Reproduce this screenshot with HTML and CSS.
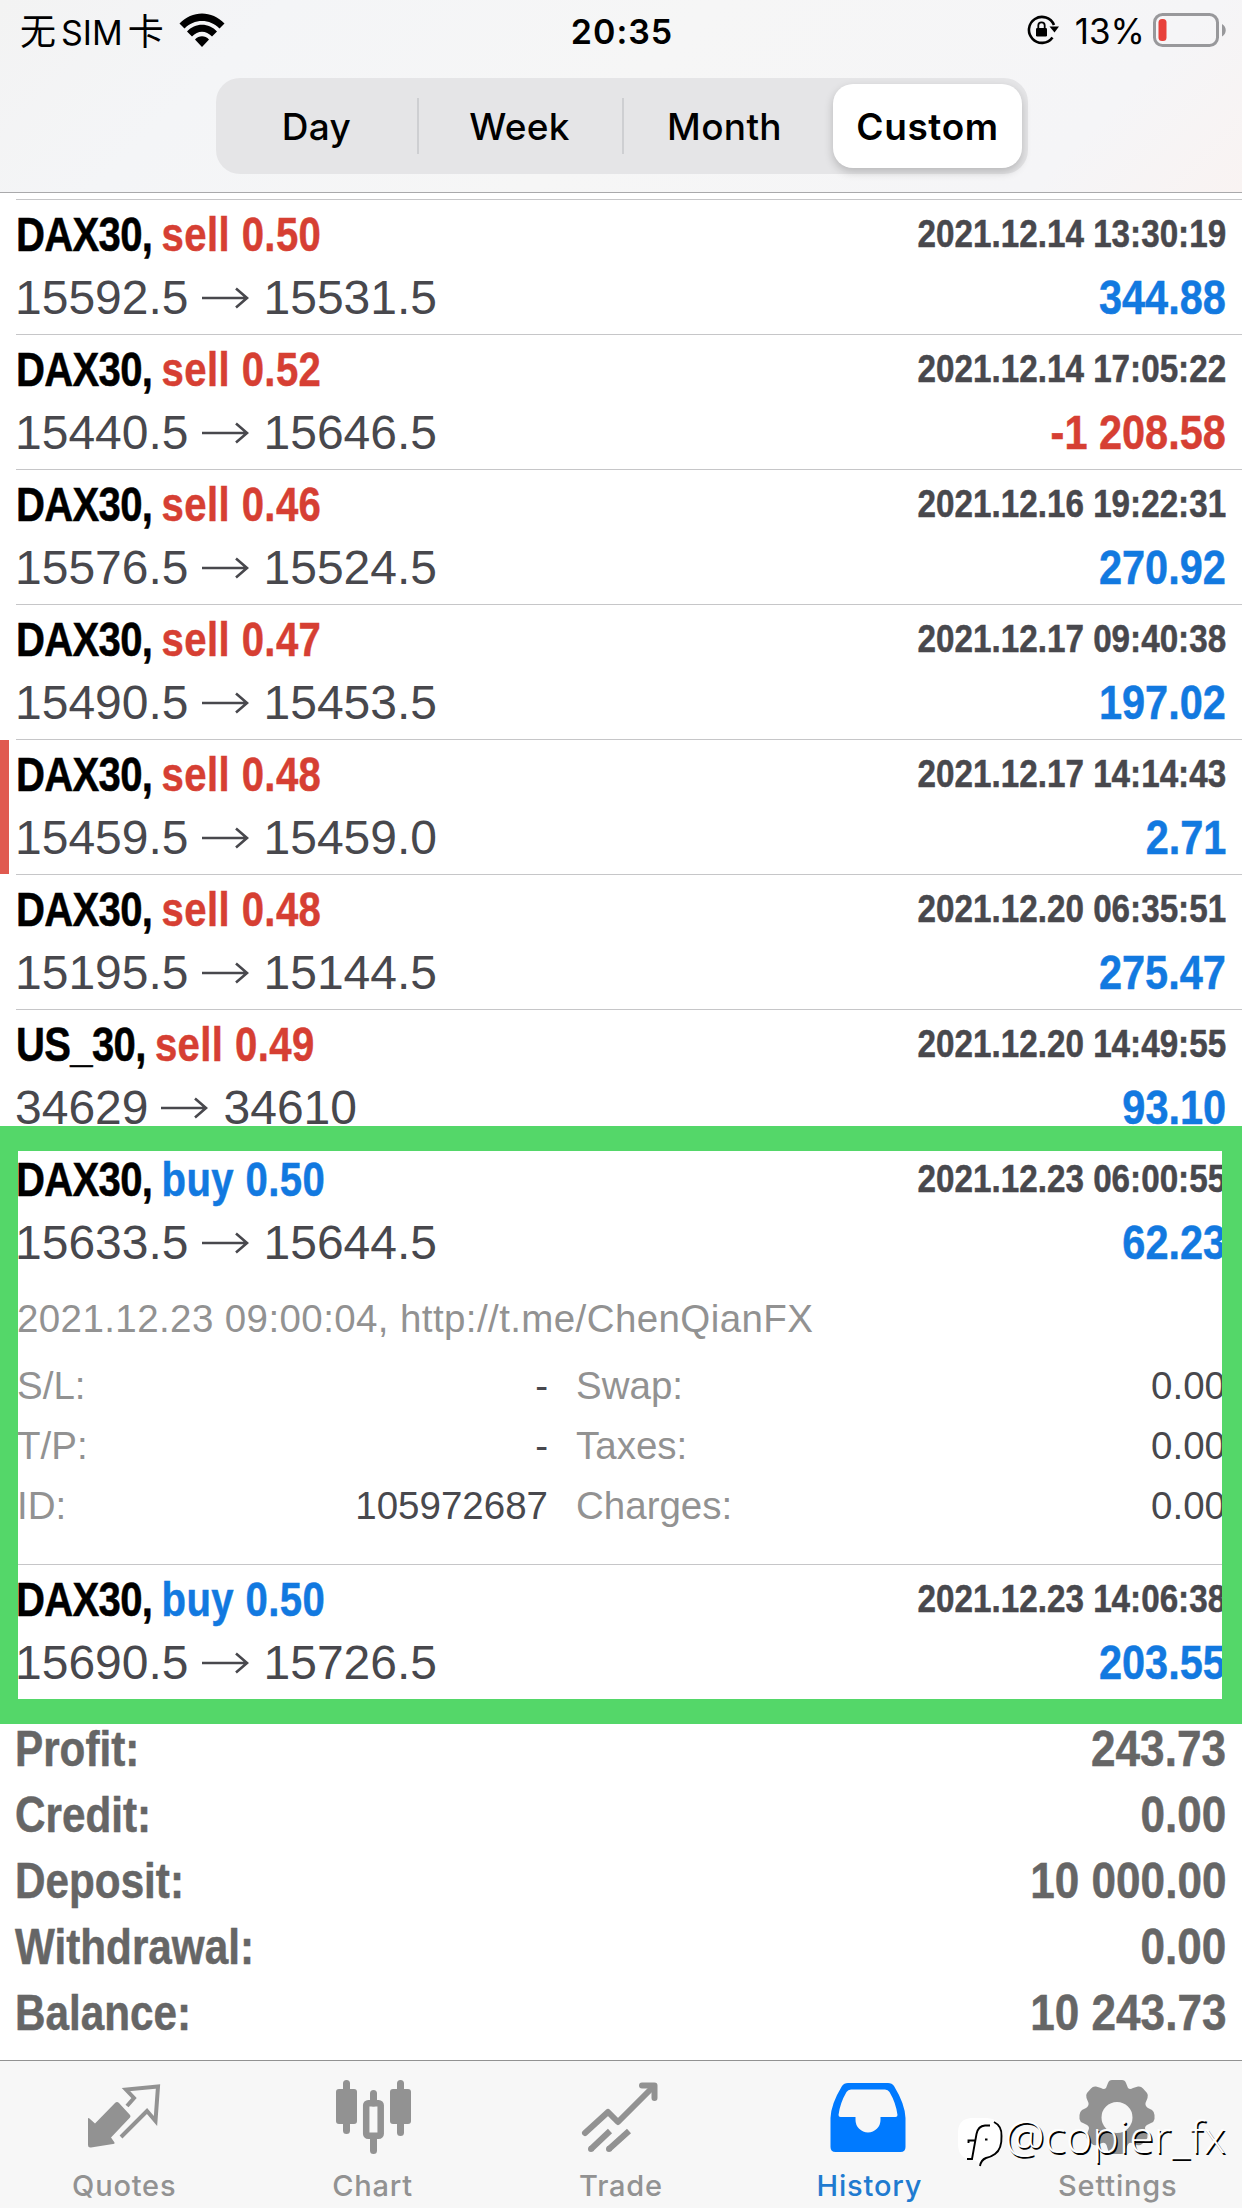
FILE: index.html
```
<!DOCTYPE html>
<html lang="en">

<head>
    <meta charset="UTF-8">
    <meta name="viewport" content="width=device-width, initial-scale=1.0">
    <title>History</title>
    <link rel="stylesheet" href="styles.css">
</head>

<body>
    <header class="header">
        <div class="status-bar">
            <div class="status-left">
                <span class="carrier"><span class="han">无</span><span>SIM</span><span class="han">卡</span></span>
                <svg class="wifi" width="46" height="34" viewBox="0 0 46 34">
                    <path d="M0.5 10.5 C13 -3 33 -3 45.5 10.5 L40.5 15.5 C31 5.5 15 5.5 5.5 15.5 Z" />
                    <path d="M8 18.5 C16 9.5 30 9.5 38 18.5 L33 23.5 C27 17 19 17 13 23.5 Z" />
                    <path d="M16 26.5 C20 22.3 26 22.3 30 26.5 L23 34 Z" />
                </svg>
            </div>
            <span class="time">20:35</span>
            <div class="status-right">
                <svg class="lock" width="33" height="30" viewBox="0 0 33 30">
                    <path d="M27 10 A13 13 0 1 0 25.5 22.5" fill="none" stroke="#000" stroke-width="2.6" />
                    <path d="M22.5 11.5 H32 L27.5 17.5 Z" />
                    <rect x="9" y="13" width="11" height="8.5" rx="1.2" />
                    <path d="M11.3 14 V10.5 a3.2 3.2 0 0 1 6.4 0 V14" fill="none" stroke="#000" stroke-width="1.8" />
                </svg>
                <span class="percent">13%</span>
                <svg width="74" height="34" viewBox="0 0 74 34">
                    <rect x="1.5" y="1.5" width="63" height="31" rx="8" fill="none" stroke="#98989b" stroke-width="3" />
                    <rect x="5.5" y="6" width="8" height="22" rx="3.5" fill="#e8403a" />
                    <path d="M69 11 c5 2.5 5 10 0 12.5 Z" fill="#98989b" />
                </svg>
            </div>
        </div>
        <div class="segments">
            <div class="segment">Day</div>
            <div class="segment divided">Week</div>
            <div class="segment divided">Month</div>
            <div class="segment selected">Custom</div>
        </div>
    </header>

    <main class="deals">
        <div class="deal">
            <div class="line"><span class="symbol">DAX30, <b class="sell">sell 0.50</b></span><span class="date">2021.12.14 13:30:19</span></div>
            <div class="line"><span class="prices">15592.5<svg class="arrow" viewBox="0 0 48 24"><path d="M0 12 H45 M34 2.5 L45 12 L34 21.5" /></svg>15531.5</span><span class="amount buy">344.88</span></div>
        </div>
        <div class="deal">
            <div class="line"><span class="symbol">DAX30, <b class="sell">sell 0.52</b></span><span class="date">2021.12.14 17:05:22</span></div>
            <div class="line"><span class="prices">15440.5<svg class="arrow" viewBox="0 0 48 24"><path d="M0 12 H45 M34 2.5 L45 12 L34 21.5" /></svg>15646.5</span><span class="amount sell">-1 208.58</span></div>
        </div>
        <div class="deal">
            <div class="line"><span class="symbol">DAX30, <b class="sell">sell 0.46</b></span><span class="date">2021.12.16 19:22:31</span></div>
            <div class="line"><span class="prices">15576.5<svg class="arrow" viewBox="0 0 48 24"><path d="M0 12 H45 M34 2.5 L45 12 L34 21.5" /></svg>15524.5</span><span class="amount buy">270.92</span></div>
        </div>
        <div class="deal">
            <div class="line"><span class="symbol">DAX30, <b class="sell">sell 0.47</b></span><span class="date">2021.12.17 09:40:38</span></div>
            <div class="line"><span class="prices">15490.5<svg class="arrow" viewBox="0 0 48 24"><path d="M0 12 H45 M34 2.5 L45 12 L34 21.5" /></svg>15453.5</span><span class="amount buy">197.02</span></div>
        </div>
        <div class="deal stopped">
            <div class="line"><span class="symbol">DAX30, <b class="sell">sell 0.48</b></span><span class="date">2021.12.17 14:14:43</span></div>
            <div class="line"><span class="prices">15459.5<svg class="arrow" viewBox="0 0 48 24"><path d="M0 12 H45 M34 2.5 L45 12 L34 21.5" /></svg>15459.0</span><span class="amount buy">2.71</span></div>
        </div>
        <div class="deal">
            <div class="line"><span class="symbol">DAX30, <b class="sell">sell 0.48</b></span><span class="date">2021.12.20 06:35:51</span></div>
            <div class="line"><span class="prices">15195.5<svg class="arrow" viewBox="0 0 48 24"><path d="M0 12 H45 M34 2.5 L45 12 L34 21.5" /></svg>15144.5</span><span class="amount buy">275.47</span></div>
        </div>
        <div class="deal">
            <div class="line"><span class="symbol">US_30, <b class="sell">sell 0.49</b></span><span class="date">2021.12.20 14:49:55</span></div>
            <div class="line"><span class="prices">34629<svg class="arrow" viewBox="0 0 48 24"><path d="M0 12 H45 M34 2.5 L45 12 L34 21.5" /></svg>34610</span><span class="amount buy">93.10</span></div>
        </div>

        <div class="highlighted">
            <div class="deal">
                <div class="line"><span class="symbol">DAX30, <b class="buy">buy 0.50</b></span><span class="date">2021.12.23 06:00:55</span></div>
                <div class="line"><span class="prices">15633.5<svg class="arrow" viewBox="0 0 48 24"><path d="M0 12 H45 M34 2.5 L45 12 L34 21.5" /></svg>15644.5</span><span class="amount buy">62.23</span></div>
                <div class="details">
                    <p class="comment">2021.12.23 09:00:04, http://t.me/ChenQianFX</p>
                    <div class="detail-grid">
                        <span>S/L:</span><span class="value">-</span><span>Swap:</span><span class="value">0.00</span>
                        <span>T/P:</span><span class="value">-</span><span>Taxes:</span><span class="value">0.00</span>
                        <span>ID:</span><span class="value">105972687</span><span>Charges:</span><span class="value">0.00</span>
                    </div>
                </div>
            </div>
            <div class="deal">
                <div class="line"><span class="symbol">DAX30, <b class="buy">buy 0.50</b></span><span class="date">2021.12.23 14:06:38</span></div>
                <div class="line"><span class="prices">15690.5<svg class="arrow" viewBox="0 0 48 24"><path d="M0 12 H45 M34 2.5 L45 12 L34 21.5" /></svg>15726.5</span><span class="amount buy">203.55</span></div>
            </div>
            <div class="frame"></div>
        </div>
    </main>

    <section class="summary">
        <div class="total"><span class="label">Profit:</span><span class="sum">243.73</span></div>
        <div class="total"><span class="label">Credit:</span><span class="sum">0.00</span></div>
        <div class="total"><span class="label">Deposit:</span><span class="sum">10 000.00</span></div>
        <div class="total"><span class="label">Withdrawal:</span><span class="sum">0.00</span></div>
        <div class="total"><span class="label">Balance:</span><span class="sum">10 243.73</span></div>
    </section>

    <nav class="tab-bar">
        <div class="tab">
            <svg width="80" height="80" viewBox="0 0 80 80">
                <path d="M4 45 Q4 43 6 45 L11 49.5 L31 29 Q33 27 35 29 L46 41 Q47 42 46 43.5 L27 63.5 L30.5 68.5 Q31 70 29 70 L7 73.5 Q4 74 4 71 Z" />
                <path d="M43 32 L50 24 L42 15.5 L74 12.5 L71.5 47 L63 37 L37 63" fill="none" stroke="#929292" stroke-width="4" />
            </svg>
            <span>Quotes</span>
        </div>
        <div class="tab">
            <svg width="80" height="80" viewBox="0 0 80 80">
                <path d="M14.5 9.5 V56.5 M68.5 9.5 V58.5 M41.5 19.5 V29 M41.5 65 V76.5" fill="none" stroke="#929292" stroke-width="7" stroke-linecap="round" />
                <rect x="4" y="15" width="21" height="35" rx="3" />
                <rect x="58" y="15" width="21" height="35" rx="3" />
                <rect x="34.2" y="29.2" width="14.5" height="32.5" rx="2" fill="none" stroke="#929292" stroke-width="6.5" />
            </svg>
            <span>Chart</span>
        </div>
        <div class="tab">
            <svg width="80" height="80" viewBox="0 0 80 80">
                <g fill="none" stroke="#929292" stroke-width="6">
                    <path d="M5 59 L28 38 L38 48 L72 14" stroke-linecap="round" stroke-linejoin="round" />
                    <path d="M62 11.5 H74.5 V24" stroke-linecap="round" stroke-linejoin="round" />
                    <path d="M11 75 L30 57 M29 75 L49 57" />
                </g>
                <circle cx="11" cy="75" r="3" />
                <circle cx="29" cy="75" r="3" />
            </svg>
            <span>Trade</span>
        </div>
        <div class="tab active">
            <svg width="80" height="80" viewBox="0 0 80 80">
                <path fill-rule="evenodd" d="M20 9 H60 Q64 9 66 12 Q77 30 77.5 44 V73 Q77.5 78 72.5 78 H7.5 Q2.5 78 2.5 73 V44 Q3 30 14 12 Q16 9 20 9 Z M23 15.5 H57 Q60 15.5 61.5 18 Q68 29 69.5 41 Q69.5 43 67.5 43 H52.5 V46 A12.5 12.5 0 0 1 27.5 46 V43 H12.5 Q10.5 43 10.5 41 Q12 29 18.5 18 Q20 15.5 23 15.5 Z" />
            </svg>
            <span>History</span>
        </div>
        <div class="tab">
            <svg width="80" height="80" viewBox="0 0 80 80">
                <path fill-rule="evenodd" d="M35 6 H45 Q48 6 49 9 L51 14 Q53 16 56 14 L61 12.5 Q64 12 66 14.5 L70 19 Q71.5 21 70.5 24 L68.5 29 Q68 32 71 34 L75 36 Q77.5 38 77.5 41 V45 Q77 48 74 49 L70 51 Q67 53 68.5 56 L70.5 61 Q71 64 69 66 L65 70 Q63 72 60 71 L55 69 Q52 68 50.5 71 L49 76 Q47 80 44 80 H36 Q33 80 31 76 L29.5 71 Q28 68 25 69 L20 71 Q17 72 15 70 L11 66 Q9 64 9.5 61 L11.5 56 Q13 53 10 51 L6 49 Q3 48 2.5 45 V41 Q2.5 38 5 36 L9 34 Q12 32 11.5 29 L9.5 24 Q8.5 21 10 19 L14 14.5 Q16 12 19 12.5 L24 14 Q27 16 29 14 L31 9 Q32 6 35 6 Z M40 28 A15.5 15.5 0 1 0 40 59 A15.5 15.5 0 1 0 40 28 Z" />
            </svg>
            <span>Settings</span>
        </div>
        <div class="watermark">
            <svg width="46" height="52" viewBox="0 0 46 52">
                <path d="M14 1 H30 Q44 2 44 16 V26 Q43 38 32 42 Q24 44 23 49 Q21 43 14 43 Q1 41 1 27 V14 Q2 2 14 1 Z" fill="#fff" />
                <path d="M37 5 Q45 9 44.5 19 Q45 32 38 37 Q34 40 29 41 Q24 43 23 49 M33 8.5 H28 Q21 9 19.5 17 L15 42 H10 M11.5 26 V23.5 H19 M28 22.5 H30.5" fill="none" stroke="#000" stroke-width="1.9" />
            </svg>
            <span>@copier_fx</span>
        </div>
    </nav>
</body>

</html>
```
FILE: styles.css
```
* {
    box-sizing: border-box;
}

body {
    width: 1242px;
    height: 2208px;
    margin: 0;
    display: flex;
    flex-direction: column;
    overflow: hidden;
    background: #fff;
    color: #48484d;
    font-family: "Liberation Sans", Arial, sans-serif;
}

.header {
    height: 193px;
    flex: none;
    border-bottom: 1px solid #a9a9ab;
    background: linear-gradient(135deg, #f3f3f3 0%, #f4f5f7 20%, #f6f6f6 50%, #f5f5f7 85%, #f9f3f2 100%);
    color: #000;
    font-family: Inter, "Noto Sans CJK SC", sans-serif;
}

.status-bar {
    display: grid;
    grid-template-columns: 1fr auto 1fr;
    align-items: center;
    height: 62px;
    padding: 0 15px 0 20px;
    font-size: 34px;
}

.status-left,
.status-right {
    display: flex;
    align-items: center;
}

.status-left {
    gap: 15px;
}

.status-right {
    justify-content: flex-end;
}

.status-left svg,
.status-right svg {
    margin-bottom: 3px;
}

.carrier {
    display: flex;
    align-items: baseline;
    gap: 5px;
    line-height: 40px;
}

.han {
    font-family: "Noto Sans CJK SC", sans-serif;
    font-size: 36px;
    font-weight: 400;
}

.time {
    font-weight: 600;
    letter-spacing: 1px;
    margin-right: 3px;
}

.percent {
    margin: 0 8px 0 15px;
    font-size: 35px;
}

.segments {
    display: grid;
    grid-template-columns: 201px 205px 205px 1fr;
    width: 812px;
    height: 96px;
    margin: 16px 0 0 216px;
    padding: 6px 6px 6px 0;
    border-radius: 24px;
    background: #e5e5e7;
    font-size: 37px;
    font-weight: 500;
    letter-spacing: 0.3px;
}

.segment {
    position: relative;
    display: flex;
    align-items: center;
    justify-content: center;
}

.divided::before {
    content: "";
    position: absolute;
    left: 0;
    top: 14px;
    width: 2px;
    height: 56px;
    background: #cecfd2;
}

.selected {
    margin-left: 6px;
    border-radius: 20px;
    background: #fff;
    box-shadow: 0 4px 10px rgba(0, 0, 0, 0.2);
    font-weight: 600;
    letter-spacing: 0.6px;
}

.deals {
    flex: none;
    margin: 6px 0 0 16px;
    border-top: 1px solid #c6c6c8;
}

.deal {
    position: relative;
    height: 135px;
    padding: 3px 16px 0 0;
    border-bottom: 1px solid #c6c6c8;
}

.line {
    display: flex;
    justify-content: space-between;
    height: 63px;
    line-height: 63px;
    font-size: 48px;
    white-space: nowrap;
}

.symbol,
.date,
.amount,
.label,
.sum {
    font-weight: bold;
    -webkit-text-stroke: 0.5px currentColor;
}

/* condensed bold text */
.symbol {
    color: #000;
    letter-spacing: -0.8px;
    word-spacing: -1.5px;
    transform: scaleX(0.835);
    transform-origin: left;
}

.symbol b {
    letter-spacing: 0.5px;
    word-spacing: 0;
}

.date {
    line-height: 61px;
    font-size: 39px;
    transform: scaleX(0.852);
    transform-origin: right;
}

.amount {
    transform: scaleX(0.864);
    transform-origin: right;
}

.sell {
    color: #d63f33;
}

.buy {
    color: #1279e0;
}

.prices {
    display: flex;
    align-items: center;
    margin-left: -1px;
}

.arrow {
    width: 48px;
    height: 24px;
    margin: 0 14px 0 13px;
    fill: none;
    stroke: #48484d;
    stroke-width: 2.6;
}

.stopped::before {
    content: "";
    position: absolute;
    left: -16px;
    top: 0;
    width: 9px;
    height: 134px;
    background: #e05a50;
}

.highlighted {
    position: relative;
}

.highlighted .deal:first-child {
    height: 420px;
}

.highlighted .deal:nth-child(2) {
    border-bottom: none;
}

.frame {
    position: absolute;
    top: -19px;
    bottom: -24px;
    left: -16px;
    right: 0;
    border: solid #54d769;
    border-width: 25px 20px 25px 18px;
}

.details {
    padding: 15px 0 0 1px;
    color: #929292;
    font-size: 38.5px;
    line-height: 60px;
}

.comment {
    margin: 0 0 7px;
    letter-spacing: 0.4px;
}

.detail-grid {
    display: grid;
    grid-template-columns: 160px 371px 250px 1fr;
}

.detail-grid > :nth-child(4n + 3) {
    padding-left: 28px;
}

.value {
    color: #48484d;
    text-align: right;
}

.summary {
    flex: none;
    height: 360px;
    padding: 16px 16px 0 15px;
    color: #666;
    font-size: 50px;
    line-height: 66px;
}

.total {
    display: flex;
    justify-content: space-between;
}

.label {
    transform: scaleX(0.845);
    transform-origin: left;
}

.sum {
    transform: scaleX(0.882);
    transform-origin: right;
}

.tab-bar {
    position: relative;
    display: grid;
    grid-template-columns: repeat(5, 1fr);
    flex: 1;
    border-top: 1px solid #929292;
    background: #f7f7f7;
    color: #929292;
    font-family: Inter, sans-serif;
    font-size: 29px;
    font-weight: 500;
    letter-spacing: 0.8px;
}

.tab {
    display: flex;
    flex-direction: column;
    align-items: center;
    padding-top: 13px;
    line-height: 36px;
}

.tab svg {
    margin: 0 1px 14px 0;
    fill: #929292;
    overflow: visible;
}

.active {
    color: #1f7bd0;
}

.active svg {
    margin-right: 3px;
    fill: #007aff;
}

.watermark {
    position: absolute;
    left: 957px;
    top: 47px;
    display: flex;
    align-items: flex-start;
    gap: 2px;
    color: #fff;
    font-family: "Open Sans", sans-serif;
    font-size: 44.5px;
    font-weight: 300;
    line-height: 56px;
    letter-spacing: 0.2px;
    text-shadow: 1.5px 1.5px 0 #000;
}

.watermark svg {
    margin-top: 9px;
}
```
